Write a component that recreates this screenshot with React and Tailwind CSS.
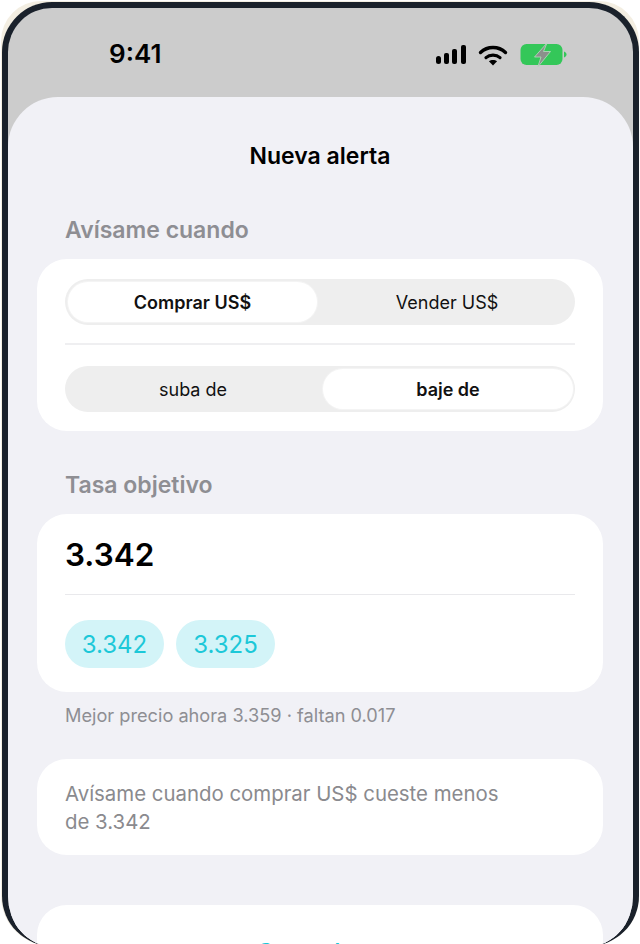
import React from "react";

const font = { fontFamily: "Inter, 'Liberation Sans', sans-serif" };

const StatusIcons = () => (
  <div className="flex items-center">
    <svg width="32" height="22" viewBox="0 0 32 22" fill="#000000">
      <rect x="1" y="12" width="5" height="8" rx="2.5" />
      <rect x="9" y="9" width="5" height="11" rx="2" />
      <rect x="17" y="5" width="5" height="15" rx="2" />
      <rect x="26" y="1" width="5" height="19" rx="2" />
    </svg>
    <svg className="ml-[11px]" width="30" height="22" viewBox="0 0 30 22" fill="none">
      <path d="M2.5 8.5C9.5 1.8 20.5 1.8 27.5 8.5" stroke="#000000" strokeWidth="3.4" strokeLinecap="round" />
      <path d="M8 13.6C11.8 10.2 18.2 10.2 22 13.6" stroke="#000000" strokeWidth="3.2" strokeLinecap="round" />
      <path d="M15 21.5L10.9 17.3C13.2 15.4 16.8 15.4 19.1 17.3Z" fill="#000000" />
    </svg>
    <svg className="ml-[12px] overflow-visible" width="47" height="22" viewBox="0 0 47 22" fill="none">
      <rect x="0.5" y="0" width="42" height="21" rx="6" fill="#34c759" />
      <path d="M44 7.5C45.5 8 46.5 9.2 46.5 10.5C46.5 11.8 45.5 13 44 13.5Z" fill="#34c759" />
      <path
        d="M27 -1L14.5 13H21L17.8 23L30.5 7.5H23.5Z"
        fill="#8b908c"
        stroke="#b9dcc2"
        strokeWidth="0.8"
        strokeLinejoin="round"
      />
    </svg>
  </div>
);

const Segment = ({ left, right, active }) => (
  <div className="grid h-[46px] grid-cols-2 rounded-full bg-[#eeeeee] text-[18px] text-[#111111]">
    <div className={`flex items-center justify-center rounded-full ${active === "left" ? "m-[3px] bg-white font-semibold shadow-[0_0_0_1px_#f4f4f4]" : "mr-[-1px]"}`}>
      {left}
    </div>
    <div className={`flex items-center justify-center rounded-full ${active === "right" ? "my-[3px] ml-[3px] mr-[2px] bg-white font-semibold shadow-[0_0_0_1px_#f4f4f4]" : "ml-[-1px]"}`}>
      {right}
    </div>
  </div>
);

const Chip = ({ value }) => (
  <div className="flex h-[48px] w-[99px] items-center justify-center rounded-[24px] bg-[#d3f4f8] pt-[1px] text-[24px] text-[#1cc8d8]">
    {value}
  </div>
);

export default function App() {
  return (
    <div className="h-[944px] w-[640px] overflow-hidden bg-white" style={font}>
      <div className="ml-[1px] mt-[1px] h-[945px] w-[638px] rounded-b-[50px] rounded-t-[40px] bg-[#f3eee2] pl-[1px] pt-[1px]">
        <div className="relative h-full overflow-hidden rounded-[50px] border-x-[6px] border-t-[6px] border-[#1a212b] bg-[#cccccc]">
          <div className="flex h-[89px] items-start justify-between pl-[101px] pr-[66px] pt-[31px]">
            <span className="text-[26px] font-semibold leading-[30px] text-black">9:41</span>
            <div className="pt-[5px]">
              <StatusIcons />
            </div>
          </div>

          {/* the frame stops short of the bottom edge */}
          <div className="absolute inset-x-[-6px] bottom-0 h-[23px] bg-[#f1f1f6]" />

          <div className="relative z-10 h-[860px] rounded-t-[50px] bg-[#f1f1f6] pl-[29px] pr-[30px]">
            <h1 className="pt-[44px] text-center text-[23px] font-[560] leading-[30px] text-black">Nueva alerta</h1>

            <h2 className="ml-[28px] mt-[44px] text-[23px] font-[560] leading-[30px] text-[#8e8e93]">Avísame cuando</h2>
            <section className="mt-[14px] rounded-[30px] bg-white px-[28px] pb-[19px] pt-[20px]">
              <Segment left="Comprar US$" right="Vender US$" active="left" />
              <div className="mb-[21px] mt-[18px] h-[2px] bg-[#efeff1]" />
              <Segment left="suba de" right="baje de" active="right" />
            </section>

            <h2 className="ml-[28px] mt-[39px] text-[23px] font-[560] leading-[30px] text-[#8e8e93]">Tasa objetivo</h2>
            <section className="mt-[14px] h-[178px] rounded-[30px] bg-white px-[28px] pt-[21px]">
              <div className="text-[31.5px] font-[560] leading-[40px] text-black">3.342</div>
              <div className="mt-[19px] h-[1px] bg-[#e9e9ec]" />
              <div className="mt-[25px] flex gap-[12px]">
                <Chip value="3.342" />
                <Chip value="3.325" />
              </div>
            </section>
            <p className="ml-[28px] mt-[10px] text-[18.2px] leading-[26px] text-[#8e8e93]">Mejor precio ahora 3.359 · faltan 0.017</p>

            <section className="mt-[31px] h-[96px] rounded-[30px] bg-white pl-[28px] pr-[90px] pt-[21px] text-[20.4px] leading-[28px] text-[#8a8a8e]">
              Avísame cuando comprar US$ cueste menos de 3.342
            </section>

            <section className="mt-[50px] h-[90px] rounded-[30px] bg-white pt-[31px] text-center text-[22px] font-semibold leading-[30px] text-[#1cc8d8]">
              Crear alerta
            </section>
          </div>
        </div>
      </div>
    </div>
  );
}
